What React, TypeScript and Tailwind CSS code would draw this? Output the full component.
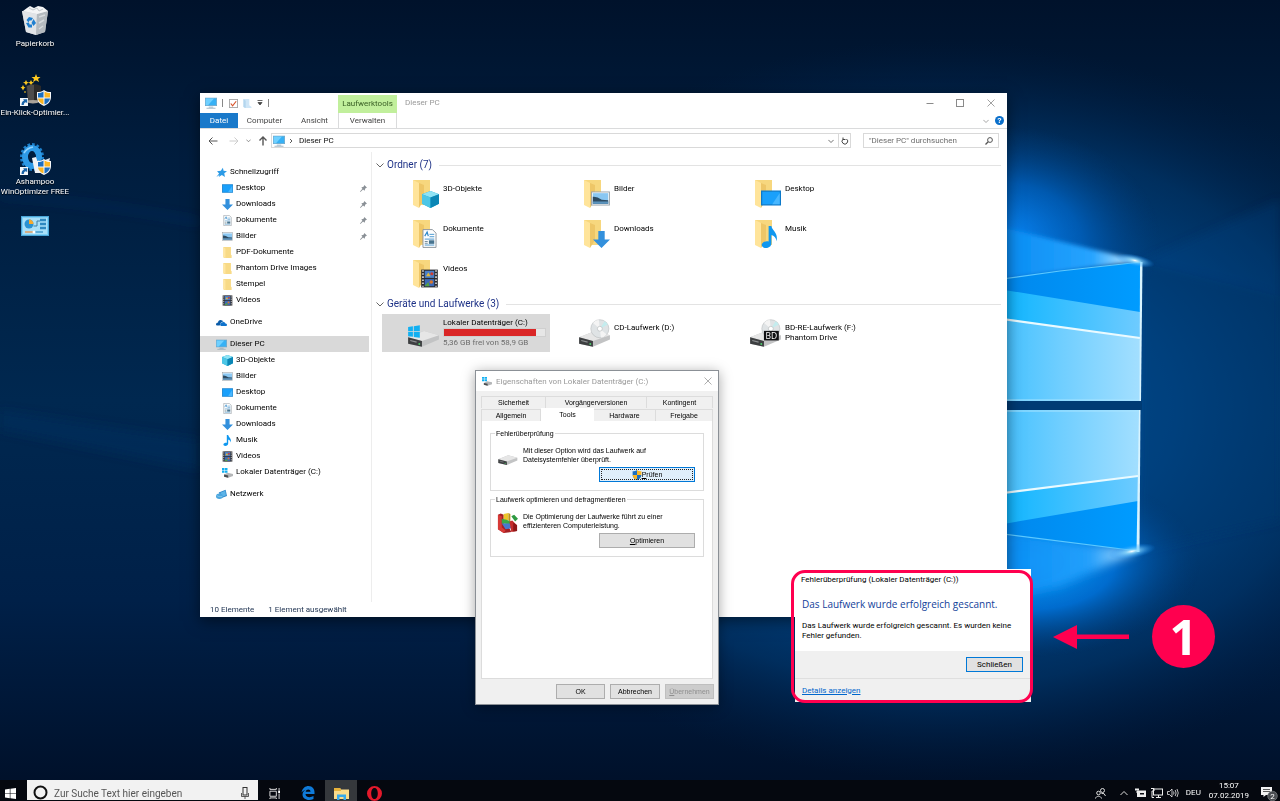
import { type ReactNode } from 'react'
import clsx from 'clsx'

type IconProps = { className?: string }

/* ---------- wallpaper ---------- */

function Wallpaper() {
  return (
    <svg
      className="absolute inset-0 h-full w-full"
      viewBox="0 0 1280 801"
      preserveAspectRatio="none"
      aria-hidden="true"
    >
      <defs>
        <linearGradient id="sky" x1="0" y1="0" x2="0" y2="1">
          <stop offset="0" stopColor="#00122b" />
          <stop offset="0.2" stopColor="#001d3e" />
          <stop offset="0.5" stopColor="#002850" />
          <stop offset="0.75" stopColor="#002048" />
          <stop offset="1" stopColor="#000f27" />
        </linearGradient>
        <radialGradient id="halo" gradientUnits="userSpaceOnUse" cx="0" cy="0" r="1" gradientTransform="translate(940 410) scale(520 370)">
          <stop offset="0" stopColor="#0068c0" />
          <stop offset="0.45" stopColor="#004f98" stopOpacity="0.85" />
          <stop offset="0.75" stopColor="#003a72" stopOpacity="0.6" />
          <stop offset="1" stopColor="#002048" stopOpacity="0" />
        </radialGradient>
        <radialGradient id="flare" gradientUnits="userSpaceOnUse" cx="0" cy="0" r="1" gradientTransform="translate(1000 240) scale(160 115)">
          <stop offset="0" stopColor="#0a8cff" />
          <stop offset="0.5" stopColor="#0068cc" stopOpacity="0.7" />
          <stop offset="1" stopColor="#003f80" stopOpacity="0" />
        </radialGradient>
        <radialGradient id="flareLow" gradientUnits="userSpaceOnUse" cx="0" cy="0" r="1" gradientTransform="translate(1030 562) scale(170 95)">
          <stop offset="0" stopColor="#0aa4ff" />
          <stop offset="0.5" stopColor="#0078e4" stopOpacity="0.8" />
          <stop offset="1" stopColor="#003f80" stopOpacity="0" />
        </radialGradient>
        <radialGradient id="spark">
          <stop offset="0" stopColor="#ffffff" />
          <stop offset="0.25" stopColor="#8fdcff" stopOpacity="0.8" />
          <stop offset="1" stopColor="#0a8cff" stopOpacity="0" />
        </radialGradient>
        <linearGradient id="pane" x1="0" y1="0" x2="1" y2="0">
          <stop offset="0" stopColor="#33bcff" />
          <stop offset="0.5" stopColor="#6fceff" />
          <stop offset="1" stopColor="#a3dfff" />
        </linearGradient>
        <linearGradient id="band" x1="0" y1="0" x2="1" y2="0">
          <stop offset="0" stopColor="#00b2ff" />
          <stop offset="1" stopColor="#6ecbff" />
        </linearGradient>
        <linearGradient id="deep" x1="0" y1="0" x2="1" y2="0">
          <stop offset="0" stopColor="#0084ea" />
          <stop offset="1" stopColor="#009cff" />
        </linearGradient>
        <linearGradient id="ray" x1="0" y1="0" x2="1" y2="0">
          <stop offset="0" stopColor="#0086f0" />
          <stop offset="0.7" stopColor="#27a4ff" />
          <stop offset="1" stopColor="#e6f8ff" />
        </linearGradient>
        <filter id="soft">
          <feGaussianBlur stdDeviation="5" />
        </filter>
        <filter id="edge">
          <feGaussianBlur stdDeviation="2" />
        </filter>
      </defs>
      <rect width="1280" height="801" fill="url(#sky)" />
      <rect width="1280" height="801" fill="url(#halo)" />
      <g filter="url(#soft)">
        <path d="M1141 262L1280 296V520L1138 551Z" fill="#00366d" opacity="0.5" />
        <path d="M1141 262L1280 200V296Z" fill="#00468a" opacity="0.25" />
        <path d="M0 196Q110 204 200 222" stroke="#003a75" strokeWidth="4" fill="none" opacity="0.4" />
        <path d="M0 410L200 440V470L0 430Z" fill="#003466" opacity="0.35" />
      </g>
      <rect width="1280" height="801" fill="url(#flare)" />
      <rect width="1280" height="801" fill="url(#flareLow)" />
      <path d="M980 222L1141 261L980 282Z" fill="url(#ray)" filter="url(#edge)" />
      <path d="M980 530L1138 551L1060 586L980 604Z" fill="url(#ray)" opacity="0.9" filter="url(#soft)" />
      {/* upper pane */}
      <path d="M980 282L1060 271L1141 262V401H980Z" fill="url(#deep)" />
      <path d="M980 286L1140 312V401H980Z" fill="url(#band)" />
      <path d="M980 316L1140 338V401H980Z" fill="url(#pane)" />
      <path d="M980 316L1140 338" stroke="#eafaff" strokeWidth="2.2" />
      <path d="M980 282L1060 271L1141 262" stroke="#5cc9ff" strokeWidth="1.2" fill="none" />
      <path d="M980 400H1140" stroke="#a9e4ff" strokeWidth="1" />
      <path d="M1140 262L1142.500 262L1141 401H1139.500Z" fill="#d8f4ff" />
      {/* gap between the panes */}
      <rect x="980" y="401" width="162" height="9" fill="#003b74" />
      {/* lower pane */}
      <path d="M980 410H1140L1138 551L980 531Z" fill="url(#deep)" />
      <path d="M980 410H1140L1138 501L980 528Z" fill="url(#band)" />
      <path d="M980 410H1140L1138 476L980 496Z" fill="url(#pane)" />
      <path d="M980 496L1138 476" stroke="#eafaff" strokeWidth="2.200" />
      <path d="M980 531L1138 551" stroke="#5cc9ff" strokeWidth="1.2" />
      <path d="M980 411H1140" stroke="#a9e4ff" strokeWidth="1" />
      <path d="M1139 410H1140.500L1139.500 552H1136.500Z" fill="#d8f4ff" />
      <ellipse cx="1135" cy="261" rx="20" ry="6" fill="url(#spark)" transform="rotate(12 1137 261)" />
      <ellipse cx="1132" cy="551" rx="24" ry="7" fill="url(#spark)" transform="rotate(-10 1134 551)" />
    </svg>
  )
}

/* ---------- small icons ---------- */

function MonitorIcon({ className }: IconProps) {
  return (
    <svg className={className} viewBox="0 0 16 16" aria-hidden="true">
      <rect x="0.500" y="1.500" width="15" height="10" fill="#37b1f5" stroke="#6ba5c8" />
      <path d="M1 2H12L4 11H1Z" fill="#6fd0ff" />
      <path d="M5 13.500H11M2 15H14" stroke="#8aa4b5" />
    </svg>
  )
}

function DesktopIcon({ className }: IconProps) {
  return (
    <svg className={className} viewBox="0 0 16 16" aria-hidden="true">
      <rect x="0.500" y="2.500" width="15" height="11" fill="#1aa0fb" stroke="#0c79c9" />
      <path d="M9 13L15 4V13Z" fill="#48b7ff" />
    </svg>
  )
}

function DownloadIcon({ className }: IconProps) {
  return (
    <svg className={className} viewBox="0 0 16 16" aria-hidden="true">
      <path d="M5 0H11V8H16L8 16L0 8H5Z" fill="#3390dc" />
    </svg>
  )
}

function DocumentIcon({ className }: IconProps) {
  return (
    <svg className={className} viewBox="0 0 16 16" aria-hidden="true">
      <path d="M2.500 0.500H10.500L13.500 3.500V15.500H2.500Z" fill="#fdfdfd" stroke="#8c959c" strokeWidth="0.800" />
      <path d="M4 6L6 2.500L7 6" stroke="#2b86c9" fill="none" />
      <path d="M8 4.500H12M8 6.500H12M4 8.500H12M4 13.500H12" stroke="#4796cf" strokeWidth="0.800" />
      <rect x="7.500" y="9.500" width="4.500" height="3" fill="#47748f" />
      <path d="M4 10.500H6.500M4 12H6.500" stroke="#6d8797" strokeWidth="0.800" />
    </svg>
  )
}

function PictureIcon({ className }: IconProps) {
  return (
    <svg className={className} viewBox="0 0 16 16" aria-hidden="true">
      <rect x="0.500" y="2.500" width="15" height="11" fill="#fff" stroke="#97a0a7" strokeWidth="0.800" />
      <rect x="1.500" y="3.500" width="13" height="9" fill="#8ac7f2" />
      <path d="M1.500 6.500Q5 6 9 9L14.500 9.500V12.500H1.500Z" fill="#2d4b62" />
      <path d="M1.500 10.500H14.500V12.500H1.500Z" fill="#5b93bd" />
    </svg>
  )
}

function FolderIcon({ className }: IconProps) {
  return (
    <svg className={className} viewBox="0 0 16 16" aria-hidden="true">
      <path d="M2 0H13V11L14 12V16H3L2 15Z" fill="#f8da86" />
      <path d="M2 0L5 2V16L2 15Z" fill="#ffe6a0" />
    </svg>
  )
}

function FilmIcon({ className }: IconProps) {
  return (
    <svg className={className} viewBox="0 0 16 16" aria-hidden="true">
      <rect x="1" y="0.500" width="14" height="15" fill="#2a2b30" />
      <rect x="4" y="1.500" width="8" height="6" fill="#4a7fc9" />
      <rect x="4" y="8.500" width="8" height="6" fill="#3c69b8" />
      <path d="M5 6L7 3L9 6Z" fill="#e3b838" />
      <circle cx="10" cy="4" r="1.300" fill="#d23c2e" />
      <circle cx="9.500" cy="11" r="1.500" fill="#d7772c" />
      <path d="M4 14L7 11L8 14.500H4Z" fill="#55a042" />
      <path d="M2.500 1V15M13.500 1V15" stroke="#e8e8e8" strokeWidth="1.300" strokeDasharray="1.300 1.300" />
    </svg>
  )
}

function CubeIcon({ className }: IconProps) {
  return (
    <svg className={className} viewBox="0 0 16 16" aria-hidden="true">
      <path d="M8 0L16 3V12L8 16L0 12V3Z" fill="#1ba6cf" />
      <path d="M8 0L16 3L8 6L0 3Z" fill="#8fe3f5" />
      <path d="M0 3L8 6V16L0 12Z" fill="#4cc6e6" />
      <path d="M8 6L16 3V12L8 16Z" fill="#0b86b5" />
    </svg>
  )
}

function MusicIcon({ className }: IconProps) {
  return (
    <svg className={className} viewBox="0 0 16 16" aria-hidden="true">
      <path d="M7 0H9C9.500 3.500 14 4.500 12.800 11C12.300 8.500 11 7 9 6.500V12.500C9 14.800 7 16 5 16C2.800 16 1.300 14.500 2.300 12.800C3.300 11.300 5.500 10.800 7 11.300Z" fill="#0f97ef" />
    </svg>
  )
}

function StarIcon({ className }: IconProps) {
  return (
    <svg className={className} viewBox="0 0 16 16" aria-hidden="true">
      <path d="M10 1L11 5.500L16 6L12 9L13 14.500L8.500 11.500L4 14.500L5 11.500L0.500 14.500L4.500 9.500L1.500 6L7 5.500Z" fill="#2c9be6" />
    </svg>
  )
}

function CloudIcon({ className }: IconProps) {
  return (
    <svg className={className} viewBox="0 0 16 16" aria-hidden="true">
      <path d="M0 11C0 9 1.500 8 3 8C3 5 6 3 9 5L11 6.500C8 6.500 6 8 5.500 12.500H2C1 12.500 0 12 0 11Z" fill="#0a5ba8" />
      <path d="M6 11C6 9 7.500 7.500 9.500 7.500C12 6.500 13.500 8 13.500 9.500C15 9.500 16 10.500 16 11.500C16 12.500 15 13 14.500 13H7.500C6.500 13 6 12 6 11Z" fill="#0f73cc" />
    </svg>
  )
}

function NetworkIcon({ className }: IconProps) {
  return (
    <svg className={className} viewBox="0 0 16 16" aria-hidden="true">
      <path d="M4 5L14 1L16 10L8 13Z" fill="#2d86c9" />
      <path d="M6 5.500L13.500 2.500L14.500 9L9 11.500Z" fill="#5cb4e8" />
      <ellipse cx="5" cy="10.500" rx="5" ry="4" fill="#4ba6de" />
      <path d="M1 9.500Q4 12 9 11" stroke="#a9dcf6" fill="none" strokeWidth="0.800" />
    </svg>
  )
}

function DriveShape() {
  return (
    <>
      <path d="M2 20L17 14L31 18V22L15 29L2 26Z" fill="#c2c3c4" />
      <path d="M2 20L17 14L31 18L15 23.500Z" fill="#e6e6e6" />
      <path d="M2 20L15 23.500V29L2 26Z" fill="#3d3f41" />
      <path d="M4 23L10 24.600" stroke="#8d9092" />
      <circle cx="12.500" cy="26.300" r="0.900" fill="#4fcf6a" />
    </>
  )
}

function SystemDriveIcon({ className }: IconProps) {
  return (
    <svg className={className} viewBox="0 0 32 32" aria-hidden="true">
      <DriveShape />
      <path d="M2 10.300L6.500 9.700V14.300H2ZM7.300 9.600L13 8.800V14.300H7.300ZM2 15H6.500V19.600L2 19ZM7.300 15H13V20.500L7.300 19.700Z" fill="#12b0f2" />
    </svg>
  )
}

// 16px variant: flag sits higher, drive is reduced to its front
function SmallSystemDriveIcon({ className }: IconProps) {
  return (
    <svg className={className} viewBox="0 0 16 16" aria-hidden="true">
      <path d="M3 11L8 8.500L16 10V13L9 15.500L3 14Z" fill="#b4b6b8" />
      <path d="M3 11L9 12.500V15.500L3 14Z" fill="#4a4d50" />
      <path d="M0 1.500H3.500V4.500H0ZM4.200 1.500H8V4.500H4.200ZM0 5.200H3.500V8.200H0ZM4.200 5.200H8V8.200H4.200Z" fill="#12b0f2" />
    </svg>
  )
}

function DriveIcon({ className }: IconProps) {
  return (
    <svg className={className} viewBox="0 0 32 32" aria-hidden="true">
      <DriveShape />
    </svg>
  )
}

function DiscDriveIcon({ className, bd }: IconProps & { bd?: boolean }) {
  return (
    <svg className={className} viewBox="0 0 32 32" aria-hidden="true">
      <DriveShape />
      <circle cx="21.500" cy="12" r="8.500" fill="#dfe3e5" stroke="#b9bdbf" strokeWidth="0.600" />
      <path d="M21.500 12L15 6.500A8.500 8.500 0 0 1 20.500 3.500ZM21.500 12L28 17.500A8.500 8.500 0 0 1 22.500 20.500Z" fill="#f4f4f4" />
      <path d="M21.500 12L26 5A8.500 8.500 0 0 1 29 8Z" fill="#c4ecee" />
      <circle cx="21.500" cy="12" r="2.300" fill="#fff" stroke="#b5b9bb" strokeWidth="0.600" />
      {bd && (
        <>
          <rect x="15" y="14" width="14" height="9" fill="#101113" />
          <text x="22" y="21.500" textAnchor="middle" fontSize="8" fontFamily="Open Sans, sans-serif" fill="#fff">
            BD
          </text>
        </>
      )}
    </svg>
  )
}

function ShieldIcon({ className }: IconProps) {
  return (
    <svg className={className} viewBox="0 0 16 16" aria-hidden="true">
      <path d="M8 0C6 1.700 3.500 2 1 2V7C1 11.500 4 14.500 8 16Z" fill="#1b6fc2" />
      <path d="M8 0C10 1.700 12.500 2 15 2V7C15 11.500 12 14.500 8 16Z" fill="#fbb625" />
      <path d="M1 8H8V16C4.500 14.700 1.300 12 1 8Z" fill="#fbb625" />
      <path d="M15 8H8V16C11.500 14.700 14.700 12 15 8Z" fill="#1b6fc2" />
    </svg>
  )
}

function PinIcon() {
  return (
    <svg className="size-[7px]" viewBox="0 0 16 16" aria-hidden="true">
      <path d="M10 0L16 6L14 7L12 8L10.500 13L7 10L1 16L0 15L5.500 8.500L3 5.500L8 4L9 2Z" fill="#8a9096" />
    </svg>
  )
}

function ChevronDown({ className }: IconProps) {
  return (
    <svg className={className} viewBox="0 0 8 8" aria-hidden="true">
      <path d="M0.500 2.500L4 6L7.500 2.500" fill="none" stroke="currentColor" />
    </svg>
  )
}

function CloseIcon() {
  return (
    <svg className="size-2" viewBox="0 0 8 8" aria-hidden="true">
      <path d="M0.500 0.500L7.500 7.500M7.500 0.500L0.500 7.500" stroke="currentColor" strokeWidth="0.800" />
    </svg>
  )
}

function DefragIcon({ className }: IconProps) {
  return (
    <svg className={className} viewBox="0 0 22 22" aria-hidden="true">
      <path d="M1 3L4 1.500L7 3V12L13 17L15 21L7 22L1 18Z" fill="#a51f22" />
      <path d="M1 3L5 4.500V16L9 19.500L7 22L1 18Z" fill="#d73a37" />
      <path d="M7 2L12 1V9L7 8Z" fill="#edc62c" />
      <path d="M12 1L14 2V10L12 9Z" fill="#b9921c" />
      <path d="M5 7L10 8L14 10V13L5 12Z" fill="#3ba848" />
      <path d="M15 4.500L18 3L22 7L19 10Z" fill="#2e9a41" />
      <path d="M5 12L14 12L15 17L9 18Z" fill="#4978cf" />
      <path d="M13 10L16 9L21 14V20L15 21Z" fill="#c32d2b" />
      <path d="M17 11L21 14V20L17 20.500Z" fill="#8e1718" />
    </svg>
  )
}

/* ---------- desktop icons ---------- */

function ShortcutArrow() {
  return (
    <>
      <rect x="1" y="24" width="8" height="8" fill="#f4f8fb" />
      <path d="M2.500 31C2.500 28 4 27 5 26.800L4.200 25.200H8.200V29.200L7 28.200C5.500 28.500 4.800 29.300 4.800 31Z" fill="#1963a8" />
    </>
  )
}

function OverlayShield() {
  return (
    <g transform="translate(17 16)">
      <path d="M8 0C6 1.700 3.500 2 1 2V7C1 11.500 4 14.500 8 16C12 14.500 15 11.500 15 7V2C12.500 2 10 1.700 8 0Z" fill="#f5f7fa" />
      <path d="M7.500 1.500C5.500 2.700 4 3 2 3V7.500H7.500Z" fill="#1b6fc2" />
      <path d="M8.500 1.500C10.500 2.700 12 3 14 3V7.500H8.500Z" fill="#fbb625" />
      <path d="M2 8.500H7.500V14.600C4.500 13.500 2.200 11 2 8.500Z" fill="#fbb625" />
      <path d="M14 8.500H8.500V14.600C11.500 13.500 13.800 11 14 8.500Z" fill="#1b6fc2" />
    </g>
  )
}

function RecycleBin() {
  return (
    <svg className="size-8" viewBox="0 0 32 32" aria-hidden="true">
      <path d="M3 6L29 6L26 27L17 30L7 27Z" fill="#c9ced2" />
      <path d="M3 6L18 9L17 30L7 27Z" fill="#e1e4e7" />
      <path d="M18 9L29 6L26 27L17 30Z" fill="#b4babf" />
      <path d="M4 6L8 3L11 1L15 3L19 1L24 2L29 6L18 9Z" fill="#f4f5f6" />
      <path d="M10 3L14 5L18 3L20 6L24 4" stroke="#c2c8cc" fill="none" />
      <path d="M7.500 15L10 12L14 13L12.500 15.500H10.500L9.500 17.500Z" fill="#1e7fd0" />
      <path d="M14.500 14L17 18L14.500 21L12.500 18Z" fill="#1e7fd0" />
      <path d="M7 18L10 17.500L10.500 19.500H13V22.500H9.500Z" fill="#1e7fd0" />
      <path d="M20 12L26 10M20 18L25 15M20 24L24 21" stroke="#d6dadd" strokeWidth="1.500" />
    </svg>
  )
}

function WizardHat() {
  return (
    <svg className="size-8" viewBox="0 0 32 32" aria-hidden="true">
      <path d="M7 12Q15 8 22 12L22 28Q14 30 9 28Z" fill="#2b2a2a" />
      <path d="M8 12Q13 10 15 11V29Q12 29.500 9 28Z" fill="#4e4c4b" />
      <path d="M6 27Q14 25 22 27Q14 32 6 27Z" fill="#aaa39a" />
      <path d="M17 0L18.200 3H21.500L19 5L20 8L17 6.200L14 8L15 5L12.500 3H15.800Z" fill="#ffc91f" />
      <path d="M7 6L8 8L10 8.500L8 9.500L7 11.500L6 9.500L4 8.500L6 8ZM12 6L13 8L15 8.500L13 9.500L12 11L11 9.500L9.500 8.500L11 8ZM4 11L5 13L6.500 13.500L5 14.500L4 16.500L3 14.500L1.500 13.500L3 13ZM6 17L7 18L6 19L5 18Z" fill="#ffc91f" />
      <ShortcutArrow />
      <OverlayShield />
    </svg>
  )
}

function GearLogo() {
  return (
    <svg className="size-8" viewBox="0 0 32 32" aria-hidden="true">
      <ellipse cx="13" cy="14" rx="10.500" ry="12.500" fill="none" stroke="#1c80cc" strokeWidth="3" strokeDasharray="2.600 1.900" />
      <ellipse cx="13" cy="14" rx="7" ry="9" fill="none" stroke="#2e9ae6" strokeWidth="6" />
      <path d="M5 10Q8 5 14 4" stroke="#8fd2ff" strokeWidth="1.500" fill="none" />
      <path d="M13 15L17 14L21 26V30H16Z" fill="#f0f2f4" />
      <path d="M19 17L22 20L26 17L31 15L30 20L21 24Z" fill="#dde2e6" />
      <ShortcutArrow />
      <OverlayShield />
    </svg>
  )
}

function ControlPanelIcon() {
  return (
    <svg className="h-5 w-7" viewBox="0 0 28 20" aria-hidden="true">
      <rect x="0.500" y="0.500" width="27" height="19" fill="#7fd0f5" stroke="#4aa6d8" />
      <rect x="2" y="2" width="24" height="16" fill="#a9e0f9" />
      <circle cx="8" cy="8" r="4.500" fill="#2a92d2" />
      <path d="M8 8V3.500A4.500 4.500 0 0 1 12.500 8Z" fill="#f6a92c" />
      <path d="M12.500 10H16V5H19" stroke="#3d7ea6" fill="none" />
      <path d="M19 4H25M19 8H25M19 12H25" stroke="#2e89c0" strokeWidth="2.400" />
      <path d="M4 16H12" stroke="#f08c3a" strokeWidth="1.200" />
      <path d="M13 16H22" stroke="#2e89c0" strokeWidth="1.200" />
      <circle cx="13" cy="16" r="1.500" fill="#fff" />
    </svg>
  )
}

function DesktopIconItem({ icon, label }: { icon: ReactNode; label?: string }) {
  return (
    <button
      aria-label={label ?? 'Systemsteuerung'}
      className="flex w-[72px] flex-col items-center gap-0.5 text-center leading-[10px] text-white [text-shadow:0_1px_1px_#000]"
    >
      {icon}
      {label && <span className="flex w-[84px] justify-center whitespace-pre">{label}</span>}
    </button>
  )
}

/* ---------- explorer ---------- */

type NavEntry = { label: string; icon: ReactNode; pinned?: boolean; root?: boolean; active?: boolean }

const s = 'size-[11px] shrink-0'

const navGroups: NavEntry[][] = [
  [
    { label: 'Schnellzugriff', icon: <StarIcon className={s} />, root: true },
    { label: 'Desktop', icon: <DesktopIcon className={s} />, pinned: true },
    { label: 'Downloads', icon: <DownloadIcon className={s} />, pinned: true },
    { label: 'Dokumente', icon: <DocumentIcon className={s} />, pinned: true },
    { label: 'Bilder', icon: <PictureIcon className={s} />, pinned: true },
    { label: 'PDF-Dokumente', icon: <FolderIcon className={s} /> },
    { label: 'Phantom Drive Images', icon: <FolderIcon className={s} /> },
    { label: 'Stempel', icon: <FolderIcon className={s} /> },
    { label: 'Videos', icon: <FilmIcon className={s} /> }
  ],
  [{ label: 'OneDrive', icon: <CloudIcon className={s} />, root: true }],
  [
    { label: 'Dieser PC', icon: <MonitorIcon className={s} />, root: true, active: true },
    { label: '3D-Objekte', icon: <CubeIcon className={s} /> },
    { label: 'Bilder', icon: <PictureIcon className={s} /> },
    { label: 'Desktop', icon: <DesktopIcon className={s} /> },
    { label: 'Dokumente', icon: <DocumentIcon className={s} /> },
    { label: 'Downloads', icon: <DownloadIcon className={s} /> },
    { label: 'Musik', icon: <MusicIcon className={s} /> },
    { label: 'Videos', icon: <FilmIcon className={s} /> },
    { label: 'Lokaler Datenträger (C:)', icon: <SmallSystemDriveIcon className={s} /> }
  ],
  [{ label: 'Netzwerk', icon: <NetworkIcon className={s} />, root: true }]
]

function NavPane() {
  return (
    <nav className="flex w-[172px] shrink-0 flex-col gap-1.5 border-r border-[#ededed] pt-3">
      {navGroups.map((group, i) => (
        <ul key={i}>
          {group.map((entry) => (
            <li key={entry.label} className={clsx('mr-0.5', entry.active && 'bg-[#d9d9d9]')}>
              <a href="#" className={clsx('flex h-4 items-center gap-[3px] pr-0.5', entry.root ? 'pl-4' : 'pl-[22px]')}>
                {entry.icon}
                <span className="grow">{entry.label}</span>
                {entry.pinned && <PinIcon />}
              </a>
            </li>
          ))}
        </ul>
      ))}
    </nav>
  )
}

function BigFolder({ children }: { children: ReactNode }) {
  return (
    <span className="relative h-7 w-[26px] shrink-0">
      <svg className="absolute inset-0" width="26" height="28" viewBox="0 0 26 28" aria-hidden="true">
        <path d="M0 0H17V25H5L0 25Z" fill="#f7d77e" />
        <path d="M0 0L6 3V28L0 25Z" fill="#ffe49a" />
        <path d="M6 3L11 5V20L6 28Z" fill="#eec667" />
      </svg>
      <span className="absolute right-0 bottom-0">{children}</span>
    </span>
  )
}

const folders = [
  { label: '3D-Objekte', icon: <CubeIcon className="size-[17px]" /> },
  { label: 'Bilder', icon: <PictureIcon className="size-[19px]" /> },
  { label: 'Desktop', icon: <DesktopIcon className="size-5" /> },
  { label: 'Dokumente', icon: <DocumentIcon className="size-[19px]" /> },
  { label: 'Downloads', icon: <DownloadIcon className="size-[17px]" /> },
  { label: 'Musik', icon: <MusicIcon className="size-[22px]" /> },
  { label: 'Videos', icon: <FilmIcon className="size-[19px]" /> }
]

function SectionHeader({ title }: { title: string }) {
  return (
    <div className="flex h-5 items-center gap-[3px] pr-1.5 text-[10px] text-[#1e3287]">
      <ChevronDown className="size-2 text-[#666]" />
      <h2>{title}</h2>
      <div className="ml-1 h-px grow bg-[#e3e3e3]" />
    </div>
  )
}

function Explorer() {
  return (
    <section className="absolute top-[93px] left-[200px] flex h-[524px] w-[807px] flex-col bg-white shadow-[0_4px_14px_rgba(0,0,0,0.5)]">
      <header className="flex h-5 items-center">
        <div className="flex w-[138px] items-center gap-[5px] pl-[5px] text-[#555]">
          <MonitorIcon className="size-3" />
          <span className="h-2 w-px bg-[#888]" />
          <svg className="ml-px size-[9px]" viewBox="0 0 10 10" aria-hidden="true">
            <rect x="0.500" y="0.500" width="9" height="9" fill="#fff" stroke="#a5a5a5" />
            <path d="M2 5L4 7.500L8 2.500" stroke="#d9542b" strokeWidth="1.300" fill="none" />
          </svg>
          <svg className="size-[9px]" viewBox="0 0 10 10" aria-hidden="true">
            <path d="M0.500 0H7V7L9.500 9V10H2L0.500 9Z" fill="#cfe6f7" />
            <path d="M0.500 0L3 2V10L0.500 9Z" fill="#b4d6ee" />
          </svg>
          <svg className="size-1.5" viewBox="0 0 6 6" aria-hidden="true">
            <path d="M0.500 0.500H5.500M1 2.500H5L3 5Z" stroke="#444" fill="#444" strokeWidth="0.800" />
          </svg>
          <span className="h-2 w-px bg-[#888]" />
        </div>
        <div className="flex h-[18px] w-[59px] items-center justify-center self-end bg-[#c1ef9c] text-[#375d23]">
          Laufwerktools
        </div>
        <h1 className="grow pl-2 text-[#999]">Dieser PC</h1>
        <div className="flex text-[#8a8a8a]">
          <button aria-label="Minimieren" className="flex w-[30px] justify-center">
            <svg className="size-2" viewBox="0 0 8 8"><path d="M0.500 4.500H7.500" stroke="currentColor" /></svg>
          </button>
          <button aria-label="Maximieren" className="flex w-[30px] justify-center">
            <svg className="size-2" viewBox="0 0 8 8"><rect x="0.500" y="0.500" width="7" height="7" fill="none" stroke="currentColor" /></svg>
          </button>
          <button aria-label="Schließen" className="flex w-8 justify-center">
            <CloseIcon />
          </button>
        </div>
      </header>

      <div className="flex h-4 items-stretch border-b border-[#dadbdc] text-[#444]">
        <button className="w-[38px] bg-[#1979ca] text-white">Datei</button>
        <button className="w-[53px]">Computer</button>
        <button className="w-[47px]">Ansicht</button>
        <button className="w-[59px] border-x border-[#dadbdc] bg-white">Verwalten</button>
        <div className="flex grow items-center justify-end gap-1.5 pr-[3px]">
          <ChevronDown className="size-1.5 text-[#888]" />
          <span className="flex size-[9px] items-center justify-center rounded-full bg-[#0a6fcb] font-bold text-white">
            ?
          </span>
        </div>
      </div>

      <div className="flex h-[23px] items-center pr-2">
        <div className="flex w-[71px] items-center gap-[11px] pl-2 text-[#555]">
          <svg className="size-2.5" viewBox="0 0 10 10" aria-hidden="true"><path d="M9.500 5H1M4.500 1.500L1 5L4.500 8.500" fill="none" stroke="currentColor" /></svg>
          <svg className="size-2.5 text-[#ccc]" viewBox="0 0 10 10" aria-hidden="true"><path d="M0.500 5H9M5.500 1.500L9 5L5.500 8.500" fill="none" stroke="currentColor" /></svg>
          <ChevronDown className="-mx-1 size-[5px]" />
          <svg className="size-2.5" viewBox="0 0 10 10" aria-hidden="true"><path d="M5 9.500V1M1.500 4.500L5 1L8.500 4.500" fill="none" stroke="currentColor" strokeWidth="1.400" /></svg>
        </div>
        <div className="mr-3 flex h-[15px] grow items-center gap-1 border border-[#d9d9d9] pl-px text-[#111]">
          <MonitorIcon className="size-3" />
          <svg className="size-1" viewBox="0 0 4 4" aria-hidden="true"><path d="M1 0L3 2L1 4" fill="none" stroke="#333" strokeWidth="0.800" /></svg>
          <button className="grow pl-0.5 text-left">Dieser PC</button>
          <ChevronDown className="size-1.5 text-[#444]" />
          <button aria-label="Aktualisieren" className="flex h-full w-3 items-center justify-center border-l border-[#d9d9d9]">
            <svg className="size-2" viewBox="0 0 8 8"><path d="M2 2.200A2.800 2.800 0 1 0 5.500 2M2 0.500V2.500H4.500" fill="none" stroke="#444" /></svg>
          </button>
        </div>
        <div className="flex h-[15px] w-[136px] items-center border border-[#d9d9d9] px-[5px]">
          <input aria-label="Suchen" className="min-w-0 grow outline-none placeholder:text-[#6d6d6d]" placeholder={'"Dieser PC" durchsuchen'} />
          <svg className="size-2" viewBox="0 0 8 8" aria-hidden="true"><circle cx="5" cy="3" r="2.400" fill="none" stroke="#555" /><path d="M3.200 4.800L0.500 7.500" stroke="#555" strokeWidth="1.300" /></svg>
        </div>
      </div>

      <div className="flex grow">
        <NavPane />
        <main className="flex grow flex-col pt-[3px] pl-1 text-black">
          <SectionHeader title="Ordner (7)" />
          <ul className="grid h-[119px] grid-cols-[171px_171px_171px] content-start pt-[5px] pl-[37px]">
            {folders.map(({ label, icon }) => (
              <li key={label} className="flex h-10 gap-1">
                <BigFolder>{icon}</BigFolder>
                <span className="pt-1 leading-[10px]">{label}</span>
              </li>
            ))}
          </ul>
          <SectionHeader title="Geräte und Laufwerke (3)" />
          <ul className="grid grid-cols-[168px_168px_168px] gap-x-[3px] pl-1.5">
            <li className="flex h-[38px] items-center gap-[3px] bg-[#d9d9d9] pl-6">
              <SystemDriveIcon className="size-[34px] shrink-0" />
              <div className="grow pr-1">
                <div className="leading-[11px]">Lokaler Datenträger (C:)</div>
                <div className="h-[9px] border border-[#cfcfcf] bg-[#e6e6e6]">
                  <div className="h-full w-[91%] bg-[#da2626]" />
                </div>
                <div className="leading-[12px] text-[#6d6d6d]">5,36 GB frei von 58,9 GB</div>
              </div>
            </li>
            <li className="flex h-[38px] items-center gap-[3px] pl-6">
              <DiscDriveIcon className="size-[34px] shrink-0" />
              <span className="pb-2.5 leading-[10px]">CD-Laufwerk (D:)</span>
            </li>
            <li className="flex h-[38px] items-center gap-[3px] pl-6">
              <DiscDriveIcon bd className="size-[34px] shrink-0" />
              <span className="leading-[10px]">
                BD-RE-Laufwerk (F:)
                <br />
                Phantom Drive
              </span>
            </li>
          </ul>
        </main>
      </div>

      <footer className="flex h-[15px] items-center gap-3.5 pl-2.5 text-[#1e3250]">
        <span>10 Elemente</span>
        <span>1 Element ausgewählt</span>
      </footer>
    </section>
  )
}

/* ---------- properties dialog ---------- */

const buttonLooks = {
  normal: 'border-[#adadad] bg-[#e1e1e1]',
  focused: 'border-[#0078d7] bg-[#e0effb] outline-1 -outline-offset-3 outline-dotted outline-[#222]',
  disabled: 'border-[#bfbfbf] bg-[#cccccc] text-[#8f8f8f]'
}

type DialogButtonProps = { children: ReactNode; className?: string; look?: keyof typeof buttonLooks }

function DialogButton({ children, className, look = 'normal' }: DialogButtonProps) {
  return (
    <button
      disabled={look === 'disabled'}
      className={clsx('flex h-[15px] items-center justify-center border', buttonLooks[look], className)}
    >
      {children}
    </button>
  )
}

const tab = 'h-3 border border-b-0 border-[#dcdcdc] bg-[#f0f0f0]'

function PropertiesDialog() {
  return (
    <section
      role="dialog"
      aria-label="Eigenschaften"
      className="absolute top-[370px] left-[475px] flex h-[335px] w-[244px] flex-col border border-[#8b9096] bg-[#f0f0f0] font-['Liberation_Sans',sans-serif] text-[7px] leading-[9px] text-black shadow-[0_2px_12px_rgba(0,0,0,0.35)]"
    >
      <header className="flex h-5 items-center gap-1 bg-white px-1.5 font-['Roboto','Open_Sans',sans-serif] text-[8px] text-[#999]">
        <SmallSystemDriveIcon className="size-2.5" />
        <h2 className="grow">Eigenschaften von Lokaler Datenträger (C:)</h2>
        <button aria-label="Schließen">
          <CloseIcon />
        </button>
      </header>
      <div className="flex px-[5px] pt-[5px]" role="tablist">
        <button role="tab" className={clsx(tab, 'w-[65px]')}>Sicherheit</button>
        <button role="tab" className={clsx(tab, 'grow border-x-0')}>Vorgängerversionen</button>
        <button role="tab" className={clsx(tab, 'w-[67px]')}>Kontingent</button>
      </div>
      <div className="flex h-[13px] items-end px-[5px]" role="tablist">
        <button role="tab" className={clsx(tab, 'w-[60px]')}>Allgemein</button>
        <button role="tab" aria-selected="true" className="h-[13px] w-[53px] bg-white pb-px">Tools</button>
        <button role="tab" className={clsx(tab, 'grow border-x-0')}>Hardware</button>
        <button role="tab" className={clsx(tab, 'w-[58px]')}>Freigabe</button>
      </div>
      <div className="mx-[5px] flex grow flex-col gap-1 border border-t-0 border-[#dcdcdc] bg-white px-2 pt-2">
        <fieldset className="h-[62px] border border-[#dcdcdc] pr-2 pl-1.5">
          <legend className="-ml-0.5 px-px">Fehlerüberprüfung</legend>
          <div className="flex items-start gap-[5px] pt-2">
            <DriveIcon className="size-[21px]" />
            <p>
              Mit dieser Option wird das Laufwerk auf
              <br />
              Dateisystemfehler überprüft.
            </p>
          </div>
          <DialogButton look="focused" className="ml-auto w-24">
            <ShieldIcon className="size-2.5" />
            <span>
              <u>P</u>rüfen
            </span>
          </DialogButton>
        </fieldset>
        <fieldset className="h-[62px] border border-[#dcdcdc] pr-2 pl-1.5">
          <legend className="-ml-0.5 px-px">Laufwerk optimieren und defragmentieren</legend>
          <div className="flex items-start gap-[5px] pt-2">
            <DefragIcon className="size-[21px]" />
            <p>
              Die Optimierung der Laufwerke führt zu einer
              <br />
              effizienteren Computerleistung.
            </p>
          </div>
          <DialogButton className="ml-auto w-24">
            <span>
              <u>O</u>ptimieren
            </span>
          </DialogButton>
        </fieldset>
      </div>
      <footer className="flex h-[25px] justify-end gap-[5px] pt-[5px] pr-1">
        <DialogButton className="w-[49px]">OK</DialogButton>
        <DialogButton className="w-[50px]">Abbrechen</DialogButton>
        <DialogButton look="disabled" className="w-[49px]">
          <span>
            <u>Ü</u>bernehmen
          </span>
        </DialogButton>
      </footer>
    </section>
  )
}

/* ---------- result dialog with callout ---------- */

function ScanResult() {
  return (
    <section role="dialog" aria-label="Fehlerüberprüfung" className="absolute top-[569px] left-[795px] w-[236px] bg-white text-black">
      <div className="h-[82px] px-1.5 pt-1.5 leading-[10px]">
        <h2>Fehlerüberprüfung (Lokaler Datenträger (C:))</h2>
        <p className="pt-3 pl-px font-['Open_Sans',sans-serif] text-[10px] leading-[14px] text-[#12419a]">
          Das Laufwerk wurde erfolgreich gescannt.
        </p>
        <p className="pt-2.5 pl-px">
          Das Laufwerk wurde erfolgreich gescannt. Es wurden keine
          <br />
          Fehler gefunden.
        </p>
      </div>
      <div className="flex h-7 items-center justify-end border-b border-[#dfdfdf] bg-[#f0f0f0] pr-2">
        <button className="h-[15px] w-[57px] border border-[#0078d7] bg-[#e1e1e1] leading-[10px]">Schließen</button>
      </div>
      <div className="flex h-[23px] items-center bg-[#f0f0f0] pl-[7px]">
        <a href="#" className="text-[#0066cc] underline">Details anzeigen</a>
      </div>
      <div className="pointer-events-none absolute top-px -right-0.5 -bottom-px -left-1 rounded-[14px] border-3 border-[#ff004f]" />
    </section>
  )
}

function Callout() {
  return (
    <div className="absolute top-[605px] left-[1053px] flex items-center gap-[23px]">
      <svg width="76" height="26" viewBox="0 0 76 26" aria-hidden="true">
        <path d="M0 13L24 1V10.500H76V15H24V25Z" fill="#ff004f" />
      </svg>
      <div className="flex size-[63px] items-center justify-center rounded-full bg-[#ff004f] font-['Open_Sans',sans-serif] text-[49px] leading-none font-bold text-white">
        1
      </div>
    </div>
  )
}

/* ---------- taskbar ---------- */

function Taskbar() {
  return (
    <footer className="absolute inset-x-0 bottom-0 flex h-[21px] items-start overflow-hidden bg-[#05080f] text-white">
      <button aria-label="Start" className="flex h-[26px] w-[27px] items-center pl-[5px]">
        <svg className="size-[11px]" viewBox="0 0 11 11"><path d="M0 1.500L4.800 0.800V5.200H0ZM5.400 0.700L11 0V5.200H5.400ZM0 5.800H4.800V10.200L0 9.500ZM5.400 5.800H11V11L5.400 10.300Z" fill="#fff" /></svg>
      </button>
      <div className="flex h-5 w-[231px] items-start bg-[#f2f2f2] pl-1.5">
        <svg className="mt-[5px] size-[15px] shrink-0" viewBox="0 0 15 15" aria-hidden="true"><circle cx="7.500" cy="7.500" r="6" fill="none" stroke="#111" strokeWidth="2" /></svg>
        <input aria-label="Suche" placeholder="Zur Suche Text hier eingeben" className="mt-[5px] ml-1.5 h-4 min-w-0 grow text-[10px] outline-none placeholder:text-[#555]" />
        <svg className="mt-[7px] mr-2 h-3 w-2.5" viewBox="0 0 10 12" aria-hidden="true"><rect x="3" y="0.500" width="4" height="7.500" fill="none" stroke="#333" /><path d="M1.500 6V9.500H8.500V6M5 9.500V12" fill="none" stroke="#333" strokeWidth="0.800" /></svg>
      </div>
      <button aria-label="Taskansicht" className="flex h-[26px] w-8 items-center justify-center">
        <svg className="size-[11px]" viewBox="0 0 12 12"><path d="M1 3.500H8V9H1ZM1 0V1.500H8V0M1 12V10.800H8V12M11 0V3M11 6V12" fill="none" stroke="#e8e8e8" /><rect x="10" y="3" width="2" height="2.500" fill="#fff" /></svg>
      </button>
      <button aria-label="Edge" className="flex h-[26px] w-[35px] items-center justify-center">
        <svg className="size-[14px]" viewBox="0 0 14 14"><path d="M0.500 6.500C1.500 2 4.500 0 7.500 0C11.500 0 13.500 3 13.500 6.500V8H4.500C4.700 11.500 9.500 12 12.500 10V13C7 15.500 1.500 13 1.500 8.500C1.500 6 3.500 4 5.500 3.500C4 4 2 4.500 0.500 6.500ZM4.700 5.800H9.500C9.500 3 5.300 2.800 4.700 5.800Z" fill="#0f7ad8" /></svg>
      </button>
      <button aria-label="Explorer" className="flex h-[26px] w-8 items-center justify-center bg-[#35383c]">
        <svg className="h-[13px] w-[15px]" viewBox="0 0 15 13"><path d="M0 1H6L7 2.500H15V12H0Z" fill="#fbdc8a" /><path d="M0 1H6L7 2.500V4H0Z" fill="#e8b33c" /><path d="M3 7.500H12V13H9.500V10H5.500V13H3Z" fill="#38a9ea" /></svg>
      </button>
      <button aria-label="Opera" className="flex h-[26px] w-[34px] items-center justify-center">
        <svg className="size-[15px]" viewBox="0 0 15 15"><path d="M7.500 0A7.500 7.500 0 1 0 7.500 15A7.500 7.500 0 1 0 7.500 0ZM7.500 2C9.800 2 10.800 4.700 10.800 7.500S9.800 13 7.500 13S4.200 10.300 4.200 7.500S5.200 2 7.500 2Z" fill="#e3192b" fillRule="evenodd" /></svg>
      </button>

      <div className="ml-auto flex h-[26px] items-center">
        <svg className="mr-3.5 size-[11px]" viewBox="0 0 11 11" aria-hidden="true"><circle cx="7.500" cy="2.500" r="2" fill="none" stroke="#ddd" /><circle cx="3.500" cy="5" r="1.800" fill="none" stroke="#ddd" /><path d="M0.500 10.500C1 7.500 6 7.500 6.500 10.500M6.500 5.500Q9.500 4.500 10.500 8" fill="none" stroke="#ddd" /></svg>
        <svg className="mr-[7px] size-2" viewBox="0 0 8 8" aria-hidden="true"><path d="M0.500 6L4 2.500L7.500 6" fill="none" stroke="#ddd" /></svg>
        <svg className="mr-[5px] h-2.5 w-[11px]" viewBox="0 0 11 10" aria-hidden="true"><rect x="2.500" y="3" width="8" height="5.500" fill="#eee" stroke="#eee" /><rect x="5" y="5" width="4" height="1.500" fill="#0a0d14" /><path d="M0 1.500H4M1 0V3M3 0V3M2 3V5" stroke="#eee" /></svg>
        <svg className="mr-1 h-2.5 w-3" viewBox="0 0 12 10" aria-hidden="true"><rect x="2.500" y="1" width="9" height="6" fill="none" stroke="#eee" /><path d="M5 9.500H10M7.500 7V9.500M0 0.500H3V3H1V9.500H3" stroke="#eee" fill="none" /></svg>
        <svg className="mr-[7px] h-2.5 w-3" viewBox="0 0 12 10" aria-hidden="true"><path d="M0.500 3.500H2.500L5 1V9L2.500 6.500H0.500ZM6.500 3.500Q7.500 5 6.500 6.500M8.200 2Q10 5 8.200 8M10 1Q12.500 5 10 9" fill="none" stroke="#eee" strokeWidth="0.800" /></svg>
        <span>DEU</span>
        <time className="ml-2 self-start pt-px text-center leading-[10px]">
          15:07
          <br />
          07.02.2019
        </time>
        <button aria-label="Benachrichtigungen" className="mr-0.5 ml-3">
          <svg className="h-4 w-[17px]" viewBox="0 0 17 16"><path d="M0 2H11V10H5L2.500 12V10H0Z" fill="#f2f2f2" /><path d="M2 4.500H9M2 6.500H9" stroke="#333" strokeWidth="0.800" /><circle cx="11.500" cy="11" r="4.800" fill="#4a4d52" stroke="#8b8e92" strokeWidth="0.600" /><text x="11.500" y="14" fontSize="8" textAnchor="middle" fill="#fff">2</text></svg>
        </button>
      </div>
    </footer>
  )
}

export default function App() {
  return (
    <div className="relative h-screen overflow-hidden bg-[#001a3a] font-['Roboto','Open_Sans',sans-serif] text-[8px] leading-[12px]">
      <Wallpaper />
      <div className="absolute top-[5px] -left-px flex flex-col items-center">
        <div className="h-[69px]"><DesktopIconItem icon={<RecycleBin />} label="Papierkorb" /></div>
        <div className="h-[69px]"><DesktopIconItem icon={<WizardHat />} label="Ein-Klick-Optimier..." /></div>
        <div className="h-[73px]"><DesktopIconItem icon={<GearLogo />} label={'Ashampoo\nWinOptimizer FREE'} /></div>
        <DesktopIconItem icon={<ControlPanelIcon />} />
      </div>
      <Explorer />
      <PropertiesDialog />
      <ScanResult />
      <Callout />
      <Taskbar />
    </div>
  )
}
